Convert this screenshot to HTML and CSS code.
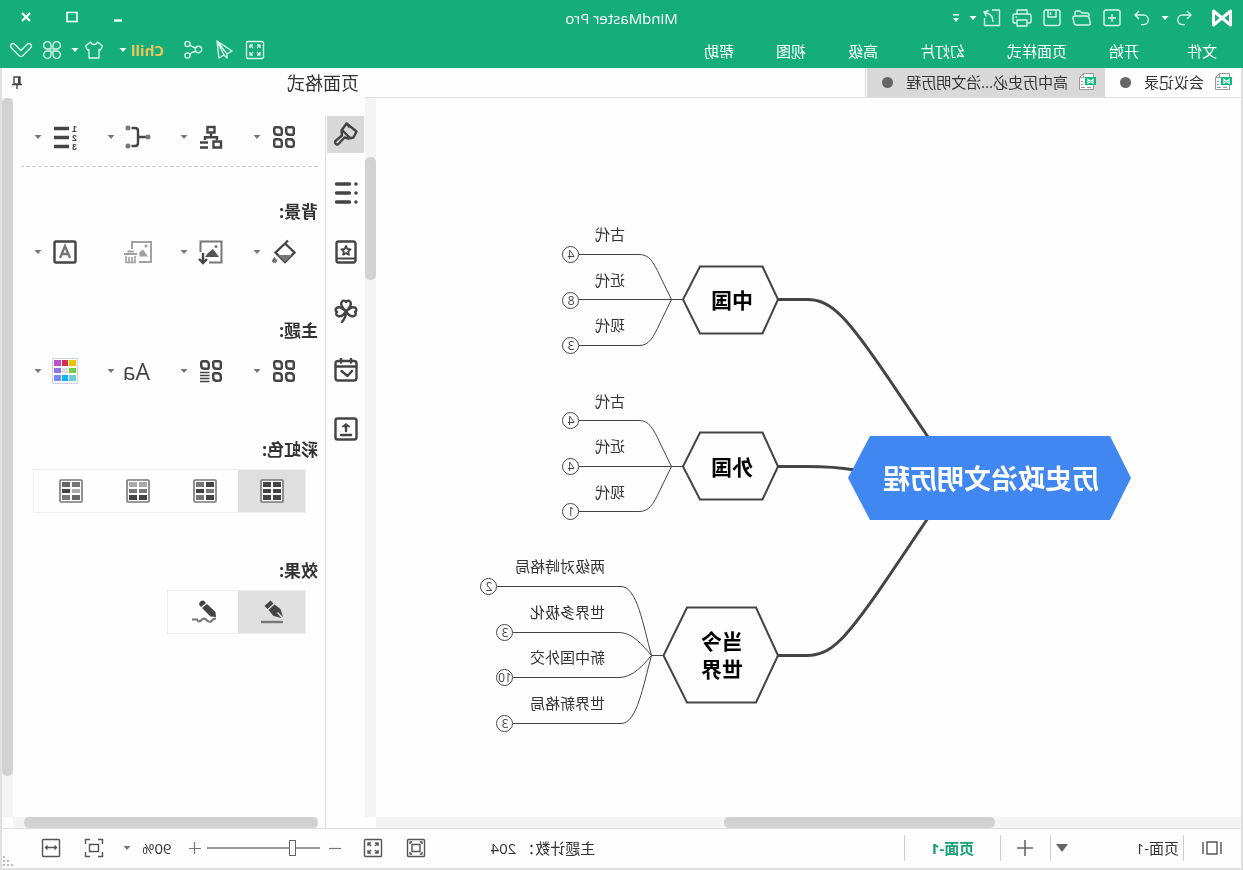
FILE: index.html
```html
<!DOCTYPE html>
<html lang="zh-CN">
<head>
<meta charset="utf-8">
<title>MindMaster Pro</title>
<link rel="stylesheet" href="styles.css">
</head>
<body>
<svg class="defs" width="0" height="0" aria-hidden="true">
  <symbol id="caret" viewBox="0 0 8 8"><path d="M.5 2h7L4 6z" fill="currentColor"/></symbol>
  <symbol id="doc" viewBox="0 0 18 18">
    <path d="M12.500.5H2.500v16h14v-12z" fill="#fff" stroke="#999"/><path d="M12.500.5v4h4M5 14.500h4M11 14.500h4M13 8.500h2M13 11.500h2" fill="none" stroke="#999"/>
    <path d="M0 4h11v8H0z" fill="#0cbc82"/><path d="M3 6.500v3.500l5-3.500v3.500z" fill="none" stroke="#fff" stroke-width="1.200"/>
  </symbol>
  <symbol id="petals" viewBox="0 0 24 24">
    <path d="M4 2.200h4.200q1.600 0 1.600 1.600v2.700q0 3.300-3.300 3.300H3.800q-1.600 0-1.600-1.600V4q0-1.800 1.800-1.800z"/>
    <path d="M20 2.200h-2.500q-3.300 0-3.300 3.300v2.700q0 1.600 1.600 1.600h2.700q3.300 0 3.300-3.300V4q0-1.800-1.800-1.800z"/>
    <path d="M4 21.800h2.500q3.300 0 3.300-3.300v-2.700q0-1.600-1.600-1.600H5.500q-3.300 0-3.300 3.300V20q0 1.800 1.800 1.800z"/>
    <path d="M20 21.800h-4.200q-1.600 0-1.600-1.600v-2.700q0-3.300 3.300-3.300h2.700q1.600 0 1.600 1.600V20q0 1.800-1.800 1.800z"/>
  </symbol>
</svg>

<div class="app">
  <header class="header">
    <div class="titlebar">
      <div class="quick">
        <svg class="logo" viewBox="0 0 22 20" aria-hidden="true"><path d="M2.500 3v14L19.500 3v14z" fill="none" stroke="#fff" stroke-width="3" stroke-linejoin="round"/></svg>
        <button class="tool" aria-label="撤销"><svg viewBox="0 0 20 20"><path d="M7 3L3 7l4 4M3 7h8.500a4.800 4.800 0 0 1 0 9.600H9"/></svg></button>
        <button class="drop" aria-label="撤销选项"><svg><use href="#caret"/></svg></button>
        <button class="tool after-drop" aria-label="重做"><svg viewBox="0 0 20 20"><path d="M13 3l4 4-4 4M17 7H8.500a4.800 4.800 0 0 0 0 9.600H11"/></svg></button>
        <button class="tool" aria-label="新建"><svg viewBox="0 0 20 20"><rect x="2" y="2" width="16" height="15.500" rx="2"/><path d="M10 6v8M6 10h8"/></svg></button>
        <button class="tool" aria-label="打开"><svg viewBox="0 0 20 20"><path d="M3 7V5q0-2 2-2h3l2 2h5q2 0 2 2v1M3 8h12q1.500 0 2 1.500l1.300 5.500q.3 2-1.700 2H4.500Q2.500 17 2 15L1 10q-.3-2 2-2z" transform="matrix(-1 0 0 1 20 0)"/></svg></button>
        <button class="tool" aria-label="保存"><svg viewBox="0 0 20 20"><rect x="2" y="2" width="16" height="15.500" rx="2"/><path d="M6 2v7h8V2M11.500 4v3"/></svg></button>
        <button class="tool" aria-label="打印"><svg viewBox="0 0 20 20"><path d="M5 6V2h10v4M5 15H2.500Q1 15 1 13.500V8q0-2 2-2h14q2 0 2 2v5.500q0 1.500-1.500 1.500H15M5 12h10v6H5zM15 9h1.500"/></svg></button>
        <button class="tool" aria-label="导出"><svg viewBox="0 0 20 20"><path d="M10 2H2.500v15.500h15V10M9 14c0-5 2-8.500 8.500-9.500M13 2.500l5 1.500-2.500 4.500"/></svg></button>
        <button class="drop" aria-label="导出选项"><svg><use href="#caret"/></svg></button>
        <button class="drop more" aria-label="更多"><svg viewBox="0 0 8 12"><path d="M1 2h6v1.600H1zM1 6h6L4 10z" fill="#fff"/></svg></button>
      </div>
      <h1 class="title">MindMaster Pro</h1>
      <div class="window-buttons">
        <button aria-label="最小化"><svg viewBox="0 0 14 14"><path d="M3 9.500h8" stroke-width="2.400"/></svg></button>
        <button aria-label="最大化"><svg viewBox="0 0 14 14"><rect x="2" y="1.500" width="10" height="9"/></svg></button>
        <button aria-label="关闭"><svg viewBox="0 0 14 14"><path d="M3 2l8 8M11 2l-8 8" stroke-width="2.200"/></svg></button>
      </div>
    </div>
    <div class="menubar">
      <nav class="menu">
        <button class="first">文件</button><button>开始</button><button>页面样式</button><button>幻灯片</button><button>高级</button><button>视图</button><button>帮助</button>
      </nav>
      <div class="actions">
        <button class="tool" aria-label="全屏"><svg viewBox="0 0 20 20"><rect x="1.500" y="1.500" width="17" height="17" rx="1.500"/><path d="M5 8V5h3M12 5h3v3M15 12v3h-3M8 15H5v-3M5 5l3 3M15 5l-3 3M15 15l-3-3M5 15l3-3"/></svg></button>
        <button class="tool" aria-label="发送"><svg viewBox="0 0 20 20"><path d="M17 1L2 11l5 3v4l3-3 5 3zM7 14L17 1l-7 14"/></svg></button>
        <button class="tool" aria-label="分享"><svg viewBox="0 0 20 20"><circle cx="4.500" cy="9.500" r="3.200"/><circle cx="15.500" cy="4" r="2.600"/><circle cx="15.500" cy="15.500" r="2.600"/><path d="M7 8l3-1 3.200-2M7 11.500l3 .5 3.200 2"/></svg></button>
        <button class="chill">Chill</button>
        <button class="drop" aria-label="Chill 选项"><svg><use href="#caret"/></svg></button>
        <button class="tool shirt" aria-label="皮肤"><svg viewBox="0 0 20 20"><path d="M6.500 2L1.500 6l2 4L5 9.500V18h10V9.500l1.500.5 2-4-5-4q-1 2.500-3.500 2.500T6.500 2z"/></svg></button>
        <button class="drop" aria-label="皮肤选项"><svg><use href="#caret"/></svg></button>
        <button class="tool apps" aria-label="应用"><svg viewBox="0 0 20 20"><path d="M9 9H5.500A3.700 3.700 0 1 1 9 5.500zM11 9V5.500A3.700 3.700 0 1 1 14.500 9zM9 11v3.500A3.700 3.700 0 1 1 5.500 11zM11 11h3.500A3.700 3.700 0 1 1 11 14.500z"/></svg></button>
        <button class="tool fold" aria-label="折叠"><svg viewBox="0 0 24 20"><path d="M2 4.500Q4 2.500 6 4.500l6 6 6-6q2-2 4 0 1 2-.5 3.500l-8 8q-1.500 1-3 0l-8-8Q1 6.500 2 4.500z"/></svg></button>
      </div>
    </div>
  </header>

  <main class="workspace">
    <section class="editor">
      <div class="tabs">
        <button class="tab"><svg class="doc"><use href="#doc"/></svg><span>会议记录</span><i class="dot"></i></button>
        <button class="tab active"><svg class="doc"><use href="#doc"/></svg><span>高中历史必...治文明历程</span><i class="dot"></i></button>
      </div>
      <div class="canvas">
        <svg class="mindmap" width="865" height="719" viewBox="2 98 865 719" role="img" aria-label="历史政治文明历程">
          <g class="trunk">
            <path d="M465 299.500H436C412 299.500 397 315 350 385L315 437"/>
            <path d="M465 466.500H436C412 466.500 400 468 388 470"/>
            <path d="M465 655.500H436C412 655.500 397 640 350 570L315 518"/>
          </g>
          <path class="root" d="M112 478L133 436H373L395 478L373 520H133z"/>
          <text class="root-text" x="252" y="489">历史政治文明历程</text>
          <g class="hex">
            <path d="M465 299.500L480.500 266.500H543L560 299.500L543 333.500H480.500z"/>
            <path d="M465 466.500L480.500 432.500H543L560 466.500L543 499.500H480.500z"/>
            <path d="M465 655.500L487 607.500H556L579.500 655.500L556 702.500H487z"/>
          </g>
          <g class="main-text">
            <text x="511" y="308">中国</text><text x="511" y="475">外国</text>
            <text x="521" y="649">当今</text><text x="521" y="677">世界</text>
          </g>
          <g class="twig">
            <path d="M560 299.500H664M571.500 299.500L583 276C590 261 594 254.500 604 254.500H664M571.500 299.500L583 323C590 338 594 345.500 604 345.500H664"/>
            <path d="M560 466.500H664M571.500 466.500L583 443C590 428 594 420.500 604 420.500H664M571.500 466.500L583 490C590 505 594 511.500 604 511.500H664"/>
            <path d="M579 655.500H591.500C600 625 606 586.500 622 586.500H746M591.500 655.500C600 646 610 632.500 624 632.500H730M591.500 655.500C600 665 610 677.500 624 677.500H730M591.500 655.500C600 686 606 723.500 622 723.500H730"/>
            <circle cx="672.500" cy="254.500" r="8"/><circle cx="672.500" cy="300.500" r="8"/><circle cx="672.500" cy="345.500" r="8"/>
            <circle cx="672.500" cy="420.500" r="8"/><circle cx="672.500" cy="466.500" r="8"/><circle cx="672.500" cy="511.500" r="8"/>
            <circle cx="754.500" cy="586.500" r="8"/><circle cx="738.500" cy="632.500" r="8"/><circle cx="738.500" cy="677.500" r="8"/><circle cx="738.500" cy="723.500" r="8"/>
          </g>
          <g class="leaf">
            <text x="618" y="240">古代</text><text x="618" y="286">近代</text><text x="618" y="331">现代</text>
            <text x="618" y="407">古代</text><text x="618" y="452">近代</text><text x="618" y="498">现代</text>
            <text x="638" y="572">两级对峙格局</text><text x="638" y="618">世界多极化</text><text x="638" y="663">新中国外交</text><text x="638" y="709">世界新格局</text>
          </g>
          <g class="count">
            <text x="672" y="259">4</text><text x="672" y="305">8</text><text x="672" y="350">3</text>
            <text x="672" y="425">4</text><text x="672" y="471">4</text><text x="672" y="516">1</text>
            <text x="754" y="591">2</text><text x="738" y="637">3</text><text x="738" y="682">10</text><text x="738" y="728">3</text>
          </g>
        </svg>
      </div>
      <div class="scroll-y"><div class="thumb"></div></div>
      <div class="scroll-x"><div class="thumb"></div></div>
    </section>

    <aside class="side">
      <div class="side-title">
        <h2>页面格式</h2>
        <button aria-label="固定"><svg viewBox="0 0 12 14"><path d="M3 1h6v7H3zM1 8.500h10M6 9v4" fill="none" stroke="#444" stroke-width="1.400"/><path d="M3 1h2v7H3z" fill="#444"/></svg></button>
      </div>
      <nav class="rail">
        <button class="active" aria-label="格式"><svg viewBox="0 0 24 24"><path d="M12.500 1.500l10 8-3 6-5 1-4-1-6 6.500q-2 1.500-3-.5t.5-3l6-5-.5-5zM9 9l7 7M13 1.500l2 3" transform="matrix(-1 0 0 1 24 0)"/></svg></button>
        <button aria-label="大纲"><svg viewBox="0 0 24 24"><path d="M8.500 3h13M8.500 12h13M8.500 21h13" stroke-width="3.400"/><path d="M2 3h.1M2 12h.1M2 21h.1" stroke-width="3.400"/></svg></button>
        <button aria-label="图标"><svg viewBox="0 0 24 24"><rect x="2.500" y="1.500" width="19" height="21" rx="2"/><path d="M3 18.500h18" stroke-width="2"/><path d="M12 6l1.400 3 3.200.3-2.400 2.200.7 3.200-2.900-1.600-2.900 1.600.7-3.200-2.400-2.200 3.200-.3z" stroke-width="1.800"/></svg></button>
        <button aria-label="剪贴画"><svg viewBox="0 0 24 24"><path d="M12 12C8 9 6 5 8 2.500q2-2 4 .5 2-2.500 4-.5c2 2.500 0 6.500-4 9.500zM12 12.500C9 9.500 5 7 2.500 9q-2 2 .5 4-2 2.500 1 4c3 1 6-1.500 8-4.500zM12 12.500C15 9.500 19 7 21.500 9q2 2-.5 4 2 2.500-1 4c-3 1-6-1.500-8-4.500zM12 13q0 5 4 10"/></svg></button>
        <button aria-label="任务"><svg viewBox="0 0 24 24"><rect x="1.500" y="3" width="21" height="19.500" rx="2.500"/><path d="M2 8.500h20M7 .5v4M17 .5v4M6 13l4.500 5 6-5" /></svg></button>
        <button aria-label="附件"><svg viewBox="0 0 24 24"><rect x="1.500" y="1.500" width="21" height="21" rx="2"/><path d="M7 18h10M12 14V9"/><path d="M8.500 9.500l3.500-3 3.500 3z" fill="#444" stroke-width="1"/></svg></button>
      </nav>
      <div class="panel">
        <div class="tools">
          <button class="item"><svg class="ico" aria-label="布局"><use href="#petals"/></svg><svg class="arrow"><use href="#caret"/></svg></button>
          <button class="item"><svg class="ico" viewBox="0 0 24 24" aria-label="结构"><rect x="8.500" y="2" width="7" height="5.500"/><path d="M12 8v4M6 15v-2.800h12V15M15 17.500h8M15 22.500h8"/><path d="M2 16.500h7.500v6H2z"/></svg><svg class="arrow"><use href="#caret"/></svg></button>
          <button class="item"><svg class="ico" viewBox="0 0 24 24" aria-label="连线"><path d="M4 12h8M18.500 3H15q-3 0-3 3v12q0 3 3 3h3.500"/><g fill="#777" stroke="none"><circle cx="2" cy="12" r="2.500"/><circle cx="22" cy="3" r="2.500"/><circle cx="22" cy="21" r="2.500"/></g></svg><svg class="arrow"><use href="#caret"/></svg></button>
          <button class="item"><svg class="ico" viewBox="0 0 24 24" aria-label="编号"><path d="M8 3.500h15M8 12.500h15M8 21.500h15" stroke-width="3.600"/><g class="digits"><text x="0" y="7">1</text><text x="0" y="16">2</text><text x="0" y="25">3</text></g></svg><svg class="arrow"><use href="#caret"/></svg></button>
        </div>
        <hr class="dash">
        <h3>背景:</h3>
        <div class="tools">
          <button class="item"><svg class="ico" viewBox="0 0 24 24" aria-label="填充"><path d="M8 .5l3 3 9.500 9-9.500 9.500-9.500-9.500L11 3.500"/><path d="M4 15h14l-7 7z" fill="#777" stroke="none"/><path d="M21.500 17.500q4.500 5 0 5t0-5z" fill="#777" stroke="#777" stroke-width="1"/></svg><svg class="arrow"><use href="#caret"/></svg></button>
          <button class="item"><svg class="ico" viewBox="0 0 24 24" aria-label="插入图片"><path d="M14 22.500H1.500v-21h21V12" stroke="#777" stroke-width="2"/><path d="M4 17l6-8 5 4 3 4z" fill="#555" stroke="none"/><circle cx="7" cy="6.500" r="1.500" fill="#777" stroke="none"/><path d="M20 13v9M16 19l4 4 4-4"/></svg><svg class="arrow"><use href="#caret"/></svg></button>
          <button class="item faded" disabled><svg class="ico" viewBox="0 0 24 24" aria-label="删除图片"><path d="M11 22H-1V2h19v7" stroke-width="2"/><path d="M2 16.500l5-7 3.500 2.500v4.500z" fill="#444" stroke="none"/><circle cx="4" cy="6" r="1.500" fill="#444" stroke="none"/><path d="M13 14h13M16.500 11.500h6" stroke-width="2"/><path d="M15 16v6.500h9V16M18 17v5M21 17v5" stroke-width="1.600"/></svg></button>
          <button class="item"><svg class="ico" viewBox="0 0 24 24" aria-label="水印"><rect x="1.500" y="1.500" width="21" height="21" rx="1.500"/><path d="M7 18l5-12 5 12M9 14h6" stroke="#777"/></svg><svg class="arrow"><use href="#caret"/></svg></button>
        </div>
        <h3>主题:</h3>
        <div class="tools">
          <button class="item"><svg class="ico" aria-label="主题"><use href="#petals"/></svg><svg class="arrow"><use href="#caret"/></svg></button>
          <button class="item"><svg class="ico" viewBox="0 0 24 24" aria-label="主题样式"><path d="M4 2.200h4.200q1.600 0 1.600 1.600v2.700q0 3.300-3.300 3.300H3.800q-1.600 0-1.600-1.600V4q0-1.800 1.800-1.800zM20 2.200h-2.500q-3.300 0-3.300 3.300v2.700q0 1.600 1.600 1.600h2.700q3.300 0 3.300-3.300V4q0-1.800-1.800-1.800zM4 21.800h2.500q3.300 0 3.300-3.300v-2.700q0-1.600-1.600-1.600H5.500q-3.300 0-3.300 3.300V20q0 1.800 1.800 1.800z"/><path d="M13.500 13.500h9.500M13.500 16.500h9.500M13.500 19.500h9.500M13.500 22.500h9.500" stroke-width="1.600"/></svg><svg class="arrow"><use href="#caret"/></svg></button>
          <button class="item"><span class="ico aa">Aa</span><svg class="arrow"><use href="#caret"/></svg></button>
          <button class="item"><svg class="ico palette" viewBox="0 0 26 26" aria-label="主题颜色"><path d="M.5.500h25v25H.5z" fill="#fff" stroke="#ccd0e8" stroke-width="1"/><g stroke="none"><path d="M2 2h7v6H2z" fill="#edc200"/><path d="M10 2h6v6h-6z" fill="#dc2c50"/><path d="M17 2h7v6h-7z" fill="#c04fcc"/><path d="M2 10h7v5H2z" fill="#72cf48"/><path d="M10 10h6v5h-6z" fill="#ddd"/><path d="M17 10h7v5h-7z" fill="#9076ee"/><path d="M2 17h7v6H2z" fill="#6dcbdf"/><path d="M10 17h6v6h-6z" fill="#04b9f6"/><path d="M17 17h7v6h-7z" fill="#7a88ff"/></g></svg><svg class="arrow"><use href="#caret"/></svg></button>
        </div>
        <h3>彩虹色:</h3>
        <div class="segments">
          <label><input type="radio" name="rainbow" aria-label="彩虹色 1" checked><svg viewBox="0 0 24 24"><rect x="1" y="1" width="22" height="22" rx="1"/><path d="M3 3h8v5H3zM13 3h8v5h-8zM3 10h8v4H3zM13 10h8v4h-8zM3 16h8v5H3zM13 16h8v5h-8z" class="c1"/></svg></label>
          <label><input type="radio" name="rainbow" aria-label="彩虹色 2"><svg viewBox="0 0 24 24"><rect x="1" y="1" width="22" height="22" rx="1"/><path class="c1" d="M3 3h8v5H3zM13 10h8v4h-8zM3 16h8v5H3z"/><path class="c2" d="M13 3h8v5h-8zM3 10h8v4H3zM13 16h8v5h-8z"/></svg></label>
          <label><input type="radio" name="rainbow" aria-label="彩虹色 3"><svg viewBox="0 0 24 24"><rect x="1" y="1" width="22" height="22" rx="1"/><path class="c3" d="M3 3h8v5H3zM13 3h8v5h-8z"/><path class="c2" d="M3 10h8v4H3zM13 10h8v4h-8z"/><path class="c1" d="M3 16h8v5H3zM13 16h8v5h-8z"/></svg></label>
          <label><input type="radio" name="rainbow" aria-label="彩虹色 4"><svg viewBox="0 0 24 24"><rect x="1" y="1" width="22" height="22" rx="1"/><path class="c2" d="M3 3h8v5H3zM13 16h8v5h-8z"/><path class="c3" d="M3 10h8v4H3z"/><path class="c1" d="M13 10h8v4h-8z"/><path class="c4" d="M13 3h8v5h-8zM3 16h8v5H3z"/></svg></label>
        </div>
        <h3>效果:</h3>
        <div class="segments">
          <label><input type="radio" name="effect" aria-label="普通" checked><svg viewBox="0 0 24 24"><path class="c1" d="M13.500.5l6 5.500-3 3-6-5.500zM9.500 4.500l6 5.500-5 6-8 2 4.500-5-1-1-5 5 2.500-8z"/><path d="M1 22h22" stroke-width="2.400"/></svg></label>
          <label><input type="radio" name="effect" aria-label="手绘"><svg viewBox="0 0 24 24"><path class="c1" d="M12 2q2-2.500 4.500-.5T17 6l-1 1-5-4zM10 4l5 4-8.500 8.500L1 17l.5-5z"/><path d="M1 18.500q3 0 5 3 3 1 5-2 3-2 5 1 3 2 4-1h5" stroke-width="2.200"/></svg></label>
        </div>
      </div>
      <div class="scroll-y"><div class="thumb"></div></div>
      <div class="scroll-x"><div class="thumb"></div></div>
    </aside>
  </main>

  <footer class="status">
    <button class="st pages" aria-label="页面列表"><svg viewBox="0 0 20 20"><path d="M1 4v12M19 4v12M5 4h10v12H5z"/></svg></button>
    <div class="page-select">
      <select aria-label="页面"><option>页面-1</option></select>
      <svg viewBox="0 0 12 10" aria-hidden="true"><path d="M0 1h12L6 9z" fill="#666"/></svg>
    </div>
    <button class="add-page" aria-label="新建页面"><svg viewBox="0 0 18 18"><path d="M9 1v16M1 9h16"/></svg></button>
    <button class="page-tab">页面-1</button>
    <div class="status-right">
      <span class="topics">主题计数：&nbsp;204</span>
      <button class="st" aria-label="适合窗口"><svg viewBox="0 0 20 20"><rect x="1.500" y="1.500" width="17" height="17" rx="1"/><path d="M6 6.500h8v7H6zM4 6V4h2M14 4h2v2M16 14v2h-2M6 16H4v-2"/></svg></button>
      <button class="st" aria-label="全屏显示"><svg viewBox="0 0 20 20"><rect x="1.500" y="1.500" width="17" height="17" rx="1"/><path d="M5 8V5h3M12 5h3v3M15 12v3h-3M8 15H5v-3M5 5l3 3M15 5l-3 3M15 15l-3-3M5 15l3-3"/></svg></button>
      <button class="zoom-step minus" aria-label="缩小"><svg viewBox="0 0 14 14"><path d="M1 7.500h12"/></svg></button>
      <input class="zoom" type="range" min="10" max="370" value="90" aria-label="缩放">
      <button class="zoom-step plus" aria-label="放大"><svg viewBox="0 0 14 14"><path d="M1 7.500h12M7.500 1v12"/></svg></button>
      <button class="percent"><span>90%</span><svg class="arrow"><use href="#caret"/></svg></button>
      <button class="st" aria-label="聚焦"><svg viewBox="0 0 20 20"><path d="M1.500 6V1.500H6M14 1.500h4.500V6M18.500 14v4.500H14M6 18.500H1.500V14M5.500 6.500h9v7h-9z"/></svg></button>
      <button class="st" aria-label="适合宽度"><svg viewBox="0 0 20 20"><rect x="1.500" y="1.500" width="17" height="17" rx="1"/><path d="M4.500 9.500h11M6.500 7.500l-2 2 2 2M13.500 7.500l2 2-2 2"/></svg></button>
    </div>
    <svg class="grip" viewBox="0 0 12 12" aria-hidden="true"><path d="M9 1h2v2H9zM5 5h2v2H5zM9 5h2v2H9zM1 9h2v2H1zM5 9h2v2H5zM9 9h2v2H9z" fill="#bbb"/></svg>
  </footer>
</div>
</body>
</html>
```
FILE: styles.css
```css
* { box-sizing: border-box; }
html, body { height: 100%; margin: 0; }
body {
  font: 15px/20px "Open Sans", "Noto Sans CJK SC", sans-serif;
  color: #333;
  background: #fefefe;
  overflow: hidden;
}
button {
  display: flex; align-items: center; justify-content: center;
  margin: 0; padding: 0; border: 0; background: none;
  font: inherit; color: inherit; white-space: nowrap;
}
svg { display: block; flex: none; }
h1, h2, h3 { margin: 0; font-weight: 400; }
.defs { position: absolute; }

/* The whole window is shown as a mirror image. */
.app {
  height: 100vh;
  display: grid;
  grid-template-rows: 68px minmax(0, 1fr) 42px;
  transform: scaleX(-1);
}

/* Header */
.header { background: #15ae7a; color: #fff; }
.titlebar {
  height: 36px;
  display: grid; grid-template-columns: 1fr auto 1fr; align-items: center;
}
.quick, .actions, .menu, .window-buttons { display: flex; align-items: center; }
.quick { padding-left: 10px; }
.logo { width: 22px; height: 20px; margin-right: 12px; }
.tool { width: 30px; height: 30px; }
.tool svg { width: 20px; height: 20px; fill: none; stroke: #d8f5ea; stroke-width: 1.4; stroke-linejoin: round; }
.drop, .drop svg { width: 8px; height: 8px; }
.after-drop { margin-left: 4px; }
.more { margin-left: 9px; }
.more, .more svg { height: 12px; }
.title { font-size: 15px; }
.window-buttons { justify-content: flex-end; padding-right: 3px; }
.window-buttons button { width: 46px; height: 30px; }
.window-buttons svg { width: 14px; height: 14px; fill: none; stroke: #fff; stroke-width: 1.6; }
.menubar { height: 30px; display: flex; justify-content: space-between; }
.menu { gap: 42px; padding-left: 26px; }
.menu .first { margin-right: 6px; }
.actions { padding: 0 6px 2px 0; }
.actions .tool { width: 31px; }
.chill { width: 37px; margin-left: 14px; color: #f2c45c; font-size: 15px; font-weight: 700; justify-content: flex-start; }
.shirt { margin-left: 9px; }
.apps { margin-left: 3px; }
.fold svg { width: 24px; }

/* Work area */
.workspace {
  display: grid; grid-template-columns: minmax(0, 1fr) 363px;
  border: solid #e0e0e0; border-width: 0 2px;
}
.editor {
  display: grid; min-width: 0; min-height: 0;
  grid-template: 30px minmax(0, 1fr) 11px / minmax(0, 1fr) 11px;
}
.tabs { grid-column: 1 / -1; display: flex; border-bottom: 1px solid #e0e0e0; }
.tab { padding: 0 15px 1px 9px; gap: 10px; }
.tab span { color: #333; }
.tab.active { background: #d9d9d9; box-shadow: 1px 0 #fefefe, 2px 0 #d9d9d9; }
.doc { width: 18px; height: 18px; }
.dot { width: 11px; height: 11px; margin-left: 3px; border-radius: 50%; background: #666; }
.canvas { overflow: hidden; }
.scroll-y, .scroll-x { background: #f4f4f4; }
.thumb { border-radius: 5px; background: #d2d2d2; }
.scroll-x .thumb { height: 11px; }
.editor .scroll-y { padding-top: 59px; }
.editor .scroll-y .thumb { height: 123px; }
.editor .scroll-x .thumb { width: 271px; margin-left: 246px; }

/* Mind map */
.mindmap { font-family: "Open Sans", "Noto Sans CJK SC", sans-serif; }
.trunk { fill: none; stroke: #444; stroke-width: 3; }
.root { fill: #4087f2; }
.root-text { font-size: 27px; font-weight: 700; fill: #fff; text-anchor: middle; }
.hex { fill: #fefefe; stroke: #444; stroke-width: 2; }
.main-text { font-size: 21px; font-weight: 700; fill: #000; text-anchor: middle; }
.twig { fill: none; stroke: #444; stroke-width: 1; }
.leaf { font-size: 15px; fill: #333; }
.count { font-size: 12px; fill: #444; text-anchor: middle; }

/* Side panel */
.side {
  display: grid; min-height: 0;
  grid-template: 30px minmax(0, 1fr) 11px / 40px minmax(0, 1fr) 11px;
}
.side-title {
  grid-column: 1 / -1;
  display: flex; align-items: center; justify-content: space-between;
  padding: 0 9px 0 6px;
}
.side-title h2 { font-size: 18px; line-height: 24px; }
.side-title svg { width: 12px; height: 14px; }
.rail {
  grid-row: 2 / 4; margin-top: 18px; padding-left: 1px;
  display: flex; flex-direction: column; gap: 22px;
  border-right: 1px solid #ddd;
}
.rail button { width: 37px; height: 37px; padding: 0 1px 1px 0; }
.rail .active { background: #d9d9d9; }
.rail svg { width: 24px; height: 24px; fill: none; stroke: #444; stroke-width: 2.4; stroke-linecap: round; stroke-linejoin: round; }
.panel { padding: 18px 8px 0 7px; overflow: hidden; }
.tools { display: grid; grid-template-columns: repeat(4, 73px); height: 42px; padding-left: 22px; }
.item { justify-content: flex-start; }
.ico { width: 24px; height: 24px; margin-right: 11px; fill: none; stroke: #444; stroke-width: 2.4; overflow: visible; }
.palette { width: 26px; height: 26px; margin: 0 10px 0 -1px; }
.arrow { width: 8px; height: 8px; color: #777; }
.digits { font: 700 9px/9px "Liberation Sans", sans-serif; fill: #444; stroke: none; }
.aa { font-size: 23px; line-height: 24px; font-weight: 500; color: #444; }
.faded { opacity: .5; }
.dash {
  height: 1px; margin: 8px 0 33px; border: 0;
  background: repeating-linear-gradient(90deg, #ccc 0 4px, transparent 4px 6px);
}
.panel h3 { margin: 46px 0 7px; font-size: 17px; line-height: 24px; font-weight: 700; }
.panel .dash + h3 { margin-top: 0; }
.segments {
  display: flex; width: fit-content; height: 44px; margin-left: 12px; padding-right: 3px;
  border: 1px solid #eee;
}
.segments label { width: 67px; display: flex; align-items: center; justify-content: center; padding-right: 1px; }
.segments label:has(:checked) { background: #dfdfdf; }
.segments input { position: absolute; opacity: 0; }
.segments svg { width: 24px; height: 24px; fill: none; stroke: #777; stroke-width: 1.6; overflow: visible; }
.segments rect { fill: #fefefe; }
.segments path[class] { stroke: none; }
.c1 { fill: #444; }
.c2 { fill: #777; }
.c3 { fill: #aaa; }
.c4 { fill: #666; }
.side .scroll-y .thumb { height: 678px; }
.side .scroll-x { grid-column: 2; margin-left: 7px; }
.side .scroll-x .thumb { margin-right: 11px; }

/* Status bar */
.status {
  position: relative;
  display: flex; align-items: center;
  padding-bottom: 2px;
  border: 2px solid #e0e0e0; border-top-width: 1px;
}
.st { width: 30px; height: 30px; }
.st svg { width: 20px; height: 20px; fill: none; stroke: #555; stroke-width: 1.4; }
.pages { margin: 0 13px 0 14px; }
.page-select { position: relative; width: 134px; height: 26px; border: solid #ccc; border-width: 0 1px; }
.page-select select {
  width: 100%; height: 26px; padding: 0 4px; border: 0;
  appearance: none; background: none; font: inherit; color: inherit;
}
.page-select svg { position: absolute; right: 5px; top: 8px; width: 12px; height: 10px; pointer-events: none; }
.add-page { width: 50px; height: 26px; border-right: 1px solid #ccc; }
.add-page svg { width: 18px; height: 18px; stroke: #666; stroke-width: 1.6; }
.page-tab { width: 96px; height: 26px; border-right: 1px solid #ccc; color: #15a070; font-weight: 700; }
.status-right { display: flex; align-items: center; margin-left: auto; padding-right: 34px; }
.status-right .st + .st { margin-left: 13px; }
.topics { margin-right: 60px; }
.zoom-step { width: 16px; height: 16px; }
.zoom-step svg { width: 14px; height: 14px; stroke: #777; stroke-width: 1.2; }
.minus { margin: 0 7px 0 15px; }
.plus { margin: 0 15px 0 4px; }
.zoom { width: 113px; height: 16px; margin: 0; appearance: none; background: linear-gradient(#999, #999) center / 100% 2px no-repeat; }
.zoom::-webkit-slider-thumb { appearance: none; width: 7px; height: 16px; border: 1px solid #666; background: #fefefe; }
.percent { gap: 11px; margin-right: 14px; }
.grip { position: absolute; right: 0; bottom: 1px; width: 12px; height: 12px; }
```
